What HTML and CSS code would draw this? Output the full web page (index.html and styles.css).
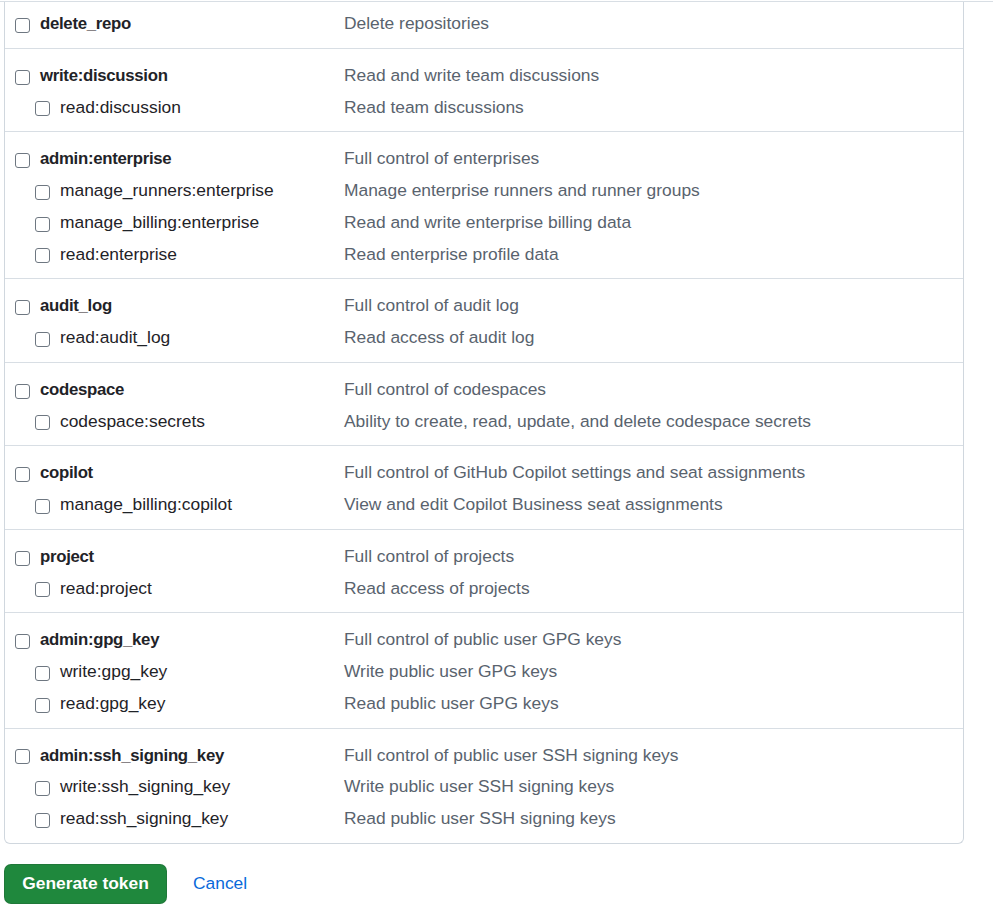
FILE: index.html
```html
<!DOCTYPE html>
<html lang="en">
<head>
<meta charset="utf-8">
<title>Token scopes</title>
<link rel="stylesheet" href="styles.css">
</head>
<body>
<div class="topline"></div>
<div class="scopes">
  <div class="group first">
    <div class="line"><label class="name top"><span class="cb"></span><b>delete_repo</b></label><span class="desc">Delete repositories</span></div>
  </div>
  <div class="group">
    <div class="line"><label class="name top"><span class="cb"></span><b>write:discussion</b></label><span class="desc">Read and write team discussions</span></div>
    <div class="line"><label class="name sub"><span class="cb"></span>read:discussion</label><span class="desc">Read team discussions</span></div>
  </div>
  <div class="group">
    <div class="line"><label class="name top"><span class="cb"></span><b>admin:enterprise</b></label><span class="desc">Full control of enterprises</span></div>
    <div class="line"><label class="name sub"><span class="cb"></span>manage_runners:enterprise</label><span class="desc">Manage enterprise runners and runner groups</span></div>
    <div class="line"><label class="name sub"><span class="cb"></span>manage_billing:enterprise</label><span class="desc">Read and write enterprise billing data</span></div>
    <div class="line"><label class="name sub"><span class="cb"></span>read:enterprise</label><span class="desc">Read enterprise profile data</span></div>
  </div>
  <div class="group">
    <div class="line"><label class="name top"><span class="cb"></span><b>audit_log</b></label><span class="desc">Full control of audit log</span></div>
    <div class="line"><label class="name sub"><span class="cb"></span>read:audit_log</label><span class="desc">Read access of audit log</span></div>
  </div>
  <div class="group">
    <div class="line"><label class="name top"><span class="cb"></span><b>codespace</b></label><span class="desc">Full control of codespaces</span></div>
    <div class="line"><label class="name sub"><span class="cb"></span>codespace:secrets</label><span class="desc">Ability to create, read, update, and delete codespace secrets</span></div>
  </div>
  <div class="group">
    <div class="line"><label class="name top"><span class="cb"></span><b>copilot</b></label><span class="desc">Full control of GitHub Copilot settings and seat assignments</span></div>
    <div class="line"><label class="name sub"><span class="cb"></span>manage_billing:copilot</label><span class="desc">View and edit Copilot Business seat assignments</span></div>
  </div>
  <div class="group">
    <div class="line"><label class="name top"><span class="cb"></span><b>project</b></label><span class="desc">Full control of projects</span></div>
    <div class="line"><label class="name sub"><span class="cb"></span>read:project</label><span class="desc">Read access of projects</span></div>
  </div>
  <div class="group">
    <div class="line"><label class="name top"><span class="cb"></span><b>admin:gpg_key</b></label><span class="desc">Full control of public user GPG keys</span></div>
    <div class="line"><label class="name sub"><span class="cb"></span>write:gpg_key</label><span class="desc">Write public user GPG keys</span></div>
    <div class="line"><label class="name sub"><span class="cb"></span>read:gpg_key</label><span class="desc">Read public user GPG keys</span></div>
  </div>
  <div class="group">
    <div class="line"><label class="name top"><span class="cb"></span><b>admin:ssh_signing_key</b></label><span class="desc">Full control of public user SSH signing keys</span></div>
    <div class="line"><label class="name sub"><span class="cb"></span>write:ssh_signing_key</label><span class="desc">Write public user SSH signing keys</span></div>
    <div class="line"><label class="name sub"><span class="cb"></span>read:ssh_signing_key</label><span class="desc">Read public user SSH signing keys</span></div>
  </div>
</div>
<div class="actions">
  <button class="btn-primary" type="button">Generate token</button>
  <a class="cancel" href="#">Cancel</a>
</div>
</body>
</html>
```

FILE: styles.css
```css
html, body {
  margin: 0;
  padding: 0;
  background: #ffffff;
}
body {
  font-family: "Liberation Sans", Arial, sans-serif;
  font-size: 17.4px;
  color: #1f2328;
  overflow: hidden;
}
.topline {
  height: 1px;
  border-bottom: 1px solid #d8dee4;
}
.scopes {
  margin-left: 4px;
  width: 960px;
  box-sizing: border-box;
  border: 1px solid #d0d7de;
  border-top: none;
  border-radius: 0 0 6px 6px;
}
.group {
  border-top: 1px solid #d8dee4;
  padding: 11px 0 8px 10px;
}
.group.first {
  border-top: none;
  padding-top: 6px;
}
.line {
  display: grid;
  grid-template-columns: 329px 1fr;
  align-items: center;
  height: 31.75px;
  line-height: 31.75px;
}
.name {
  display: flex;
  align-items: center;
  white-space: nowrap;
  color: #1f2328;
}
.name b {
  font-weight: 700;
  font-size: 16.8px;
  letter-spacing: -0.3px;
}
.name.sub {
  padding-left: 20px;
}
.cb {
  box-sizing: border-box;
  width: 15px;
  height: 15px;
  border: 1px solid #6e7781;
  border-radius: 3px;
  background: #ffffff;
  margin: 3px 10px 0 0;
  flex: none;
}
.desc {
  color: #59636e;
  white-space: nowrap;
}
.actions {
  display: flex;
  align-items: center;
  gap: 26px;
  margin: 20px 0 0 4px;
}
.btn-primary {
  font-family: "Liberation Sans", Arial, sans-serif;
  font-size: 17.4px;
  font-weight: 700;
  color: #ffffff;
  background: #1f883d;
  border: 1px solid rgba(31, 35, 40, 0.15);
  border-radius: 7px;
  height: 40px;
  width: 163px;
  padding: 0;
}
.cancel {
  color: #0969da;
  text-decoration: none;
  font-size: 17.4px;
}
```
